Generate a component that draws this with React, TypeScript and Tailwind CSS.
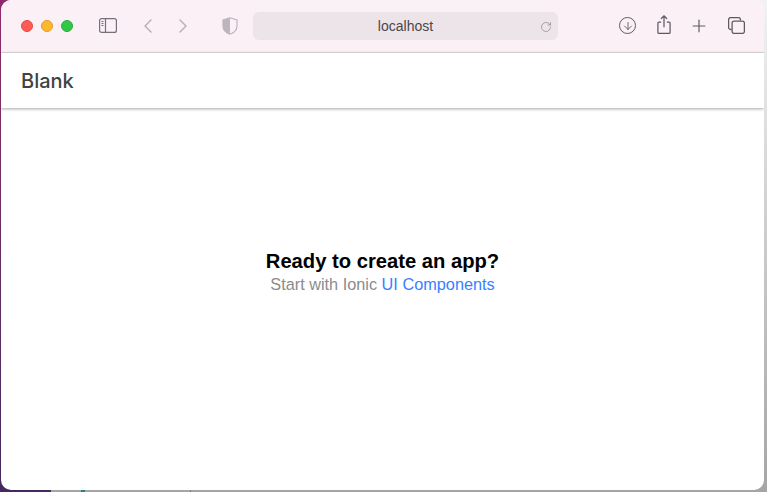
import { ArrowDown, ChevronLeft, ChevronRight, Plus, RotateCw } from "lucide-react";

const FONT = "font-['Liberation_Sans','Arial',sans-serif]";

function TrafficLight({ color, border }: { color: string; border: string }) {
  return <span className={`size-3 rounded-full border ${color} ${border}`} />;
}

function SidebarIcon() {
  return (
    <svg width="18" height="15" viewBox="0 0 18 15" fill="none" stroke="#77707a" strokeWidth="1.2">
      <rect x="0.6" y="0.6" width="16.8" height="13.8" rx="2" />
      <path d="M6.5 0.6v13.8" />
      <path d="M2.5 3.5h2M2.5 5.5h2M2.5 7.5h2" strokeWidth="1" />
    </svg>
  );
}

function ShieldIcon() {
  return (
    <svg width="16" height="18" viewBox="0 0 16 18">
      <path d="M8 0.8 15 3v6c0 4-3 6.800-7 8.200C4 15.800 1 13 1 9V3z" fill="none" stroke="#bdb5bc" strokeWidth="1.2" />
      <path d="M8 0.800 1 3v6c0 4 3 6.800 7 8.200z" fill="#bdb5bc" />
    </svg>
  );
}

function ShareIcon() {
  return (
    <svg width="14" height="19" viewBox="0 0 14 20" fill="none" stroke="#5f5a61" strokeWidth="1.3">
      <path d="M4 7.500H1.600a1 1 0 0 0-1 1v9.900a1 1 0 0 0 1 1h10.800a1 1 0 0 0 1-1V8.500a1 1 0 0 0-1-1H10" />
      <path d="M7 13V1M3.800 4 7 1l3.200 3" />
    </svg>
  );
}

function TabsIcon() {
  return (
    <svg width="17" height="17" viewBox="0 0 17 17" fill="none" stroke="#5f5a61" strokeWidth="1.3">
      <path d="M3.500 12.500H2.600a2 2 0 0 1-2-2V2.600a2 2 0 0 1 2-2h7.800a2 2 0 0 1 2 2v1" />
      <rect x="4.100" y="4.100" width="12.300" height="12.300" rx="2" />
    </svg>
  );
}

export default function App() {
  return (
    <div className={`relative h-[492px] w-[767px] overflow-hidden bg-gradient-to-b from-[#8e2a6c] to-[#43295f] ${FONT}`}>
      <div className="absolute inset-x-[51px] bottom-0 h-[3px] bg-[#a5a5a5]" />
      <div className="absolute bottom-0 left-[81px] h-[3px] w-[4px] bg-[#2a7f80]" />
      <div className="absolute bottom-0 left-[190px] h-[3px] w-px bg-[#808080]" />
      <div className="absolute inset-y-0 right-0 w-[51px] bg-gradient-to-b from-[#f2f2f2] to-[#a5a5a5]" />

      <div className="relative ml-px mr-[3px] flex h-[490px] flex-col overflow-hidden rounded-[10px] bg-white">
        <div className="flex h-[53px] shrink-0 items-center border-b border-[#dcd8dc] bg-[#faf0f6] pb-px">
          <div className="ml-[20px] flex w-[52px] gap-2">
            <TrafficLight color="bg-[#fd5b54]" border="border-[#e64a43]" />
            <TrafficLight color="bg-[#fdb72f]" border="border-[#e09f2a]" />
            <TrafficLight color="bg-[#33c748]" border="border-[#2cad3e]" />
          </div>
          <div className="ml-[26px] flex">
            <SidebarIcon />
          </div>
          <ChevronLeft className="ml-[19px] size-[24px] text-[#b4adb3]" strokeWidth={1.4} />
          <ChevronRight className="ml-[11px] size-[24px] text-[#b4adb3]" strokeWidth={1.4} />
          <div className="ml-[27px] flex">
            <ShieldIcon />
          </div>
          <div className="relative ml-[15px] flex h-[28px] w-[305px] items-center justify-center rounded-md bg-[#ede4e9] pt-px text-[14px] text-[#4a464b]">
            localhost
            <RotateCw className="absolute right-[6px] top-[9px] size-[12px] text-[#8b868b]" strokeWidth={1.4} />
          </div>
          <div className="ml-[61px] flex size-[17px] items-center justify-center rounded-full border-[1.4px] border-[#5f5a61]">
            <ArrowDown className="size-[12px] text-[#5f5a61]" strokeWidth={1.8} />
          </div>
          <div className="ml-[21px] flex pb-[3px]">
            <ShareIcon />
          </div>
          <Plus className="ml-[18px] size-[20px] text-[#5f5a61]" strokeWidth={1.4} />
          <div className="ml-[19px] flex">
            <TabsIcon />
          </div>
        </div>

        <div className="z-10 flex h-[55px] shrink-0 items-center bg-white pl-[20px] text-[#424242] shadow-[0_1px_3px_rgba(0,0,0,0.35)]">
          <span className="font-['Inter',sans-serif] text-[20px] font-medium">Blank</span>
        </div>

        <div className="flex flex-1 flex-col items-center pt-[140px] text-center">
          <strong className="text-[20.2px] leading-[26px] font-bold text-black">Ready to create an app?</strong>
          <p className="text-[16.3px] leading-[21px] text-[#8c8c8c]">
            Start with Ionic <a className="text-[#3880ff]">UI Components</a>
          </p>
        </div>
      </div>
    </div>
  );
}
